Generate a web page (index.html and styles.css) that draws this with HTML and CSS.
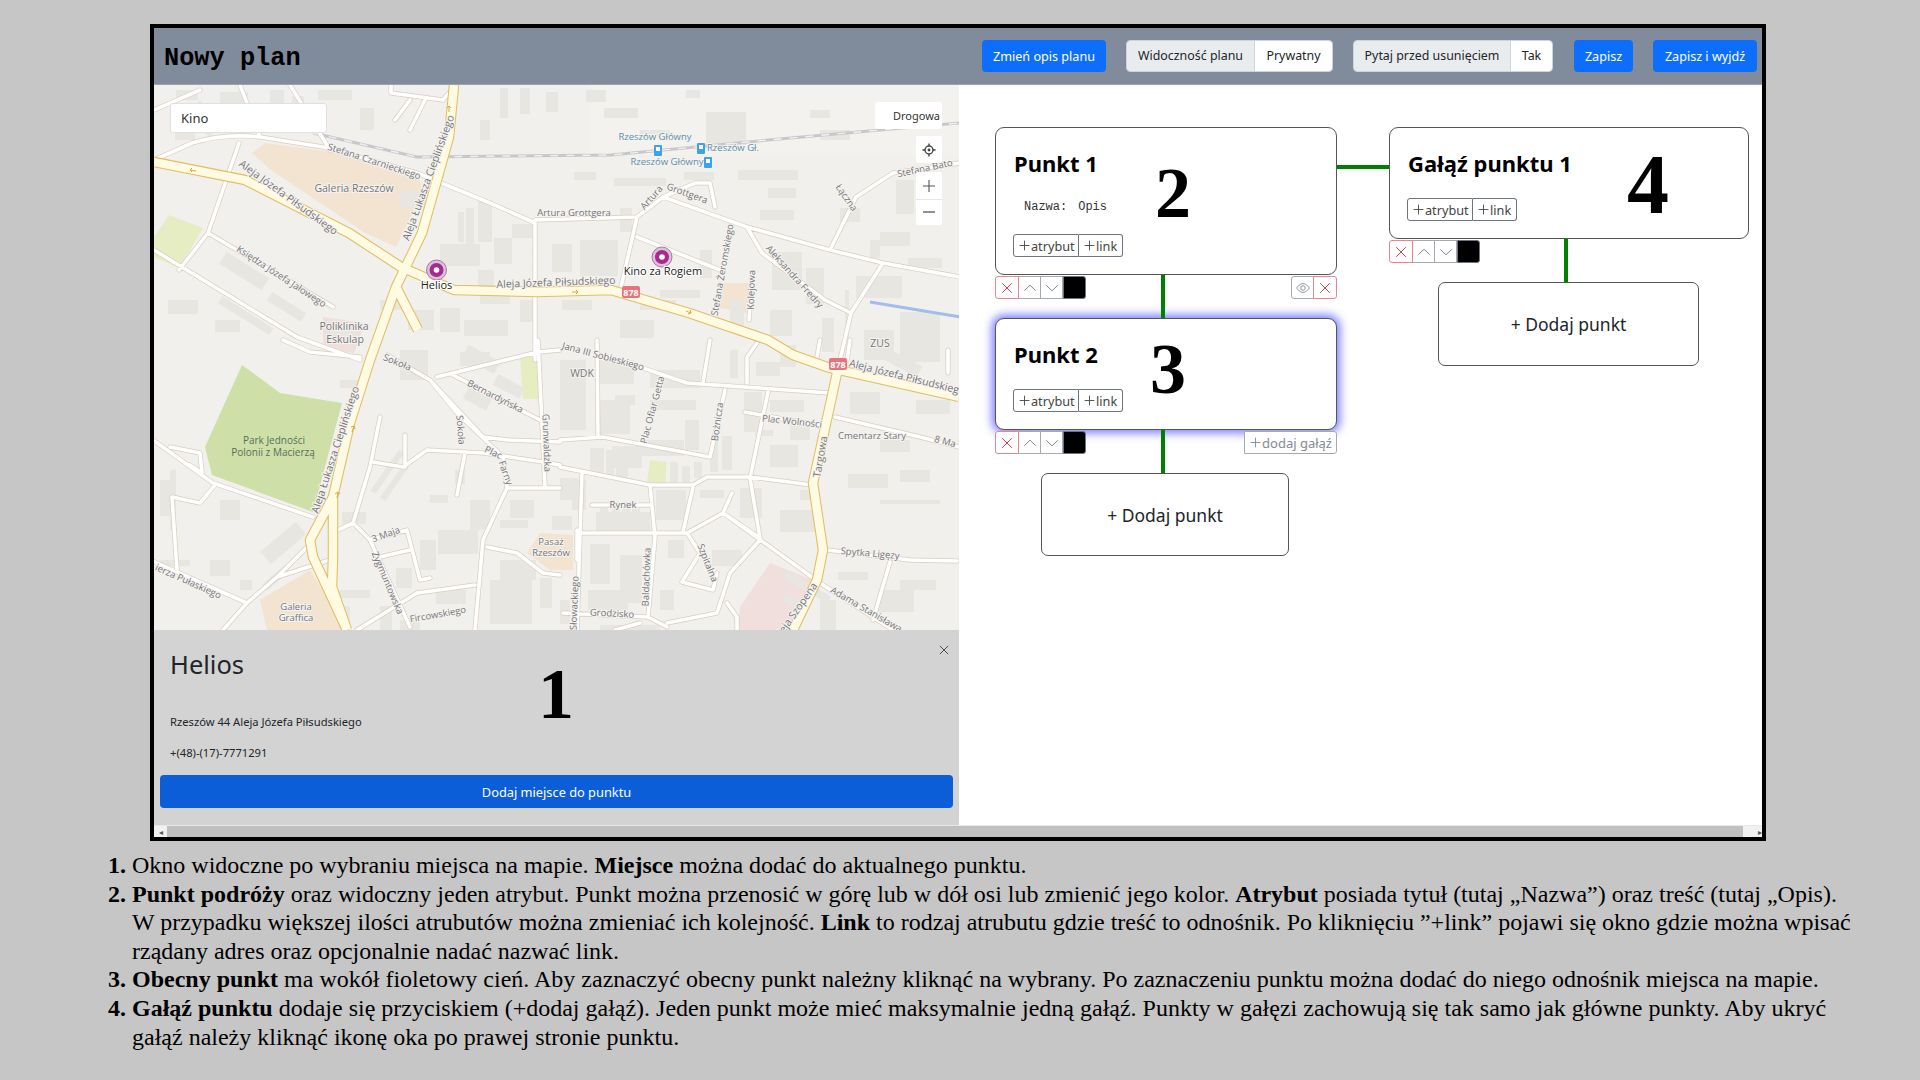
FILE: index.html
```html
<!DOCTYPE html>
<html lang="pl">
<head>
<meta charset="utf-8">
<title>Nowy plan</title>
<link rel="stylesheet" href="styles.css">
</head>
<body>
<svg class="defs" width="0" height="0" aria-hidden="true">
  <symbol id="i-x" viewBox="0 0 16 16"><path d="M2.5 2.5l11 11M13.5 2.5l-11 11" fill="none" stroke="currentColor" stroke-width="1.1"/></symbol>
  <symbol id="i-up" viewBox="0 0 16 16"><path d="M1.5 11L8 4.8 14.5 11" fill="none" stroke="currentColor" stroke-width="1.1"/></symbol>
  <symbol id="i-down" viewBox="0 0 16 16"><path d="M1.5 5L8 11.2 14.5 5" fill="none" stroke="currentColor" stroke-width="1.1"/></symbol>
  <symbol id="i-eye" viewBox="0 0 16 16"><path d="M.8 8S3.6 3 8 3s7.2 5 7.2 5-2.8 5-7.2 5S.8 8 .8 8z" fill="none" stroke="currentColor" stroke-width="1"/><circle cx="8" cy="8" r="2.6" fill="none" stroke="currentColor" stroke-width="1"/></symbol>
  <symbol id="i-plus" viewBox="0 0 16 16"><path d="M8 2v12M2 8h12" fill="none" stroke="currentColor" stroke-width="1.1"/></symbol>
</svg>

<main class="window">
  <header class="topbar">
    <h1 class="title">Nowy plan</h1>
    <button class="btn primary w-opis">Zmień opis planu</button>
    <div class="pair w-vis"><span class="pair-label">Widoczność planu</span><span class="pair-value">Prywatny</span></div>
    <div class="pair w-ask"><span class="pair-label">Pytaj przed usunięciem</span><span class="pair-value">Tak</span></div>
    <button class="btn primary w-save">Zapisz</button>
    <button class="btn primary w-exit">Zapisz i wyjdź</button>
  </header>

  <div class="workspace">
    <section class="left">
      <div class="map">
        <svg class="map-art" viewBox="154 85 805 545" width="805" height="545" xmlns="http://www.w3.org/2000/svg">
          <rect class="m-bg" x="154" y="85" width="805" height="545"/>
          <rect class="m-bg2" x="590" y="85" width="369" height="70"/>
          <g class="m-area">
            <path class="a-tan" d="M252 153L265 143 339 153 420 180 422 193 396 247 365 233 271 170z"/>
            <path class="a-tan" d="M260 600L310 570 347 630 267 630z"/>
            <path class="a-tan" d="M527 553L540 533 573 535 573 570 550 570z"/>
            <path class="a-tan" d="M723 283H749L747 313 715 307z"/>
            <path class="a-park" d="M242 365L280 393 342 403 313 512 212 475 205 447z"/>
            <path class="a-lime" d="M169 215L203 228 179 268 154 257V237z"/>
            <path class="a-lime" d="M520 357L537 355 540 399H523z"/>
            <path class="a-lime" d="M650 460L667 462 665 483 647 482z"/>
            <path class="a-pink" d="M770 563L813 580 793 630H738L740 607z"/>
            <path class="a-pink" d="M323 317L365 323 354 353 323 350z"/>
          </g>
          <path class="m-b" d="M168 300h30v14h-30zM215 320h25v12h-25zM176 90h22v10h-22zM220 92h28v12h-28zM270 90h14v24h-14zM292 96h12v30h-12zM318 90h34v10h-34zM360 108h14v22h-14zM400 190h26v18h-26zM478 200h14v42h-14zM466 208h8v36h-8zM458 212h6v30h-6zM500 88h8v30h-8zM520 88h10v26h-10zM546 92h12v20h-12zM586 90h20v12h-20zM604 108h34v10h-34zM706 112h40v36h-40zM686 90h14v8h-14zM614 178h52v8h-52zM684 172h30v8h-30zM738 170h60v10h-60zM574 172h22v8h-22zM620 208h12v24h-12zM478 270h16v26h-16zM494 238h18v26h-18zM512 224h20v14h-20zM440 244h40v22h-40zM580 240h38v36h-38zM552 244h20v28h-20zM560 286h38v4h-38zM840 208h20v14h-20zM820 130h30v10h-30zM896 180h18v34h-18zM880 232h30v14h-30zM908 258h34v10h-34zM856 276h46v22h-46zM768 188h28v10h-28zM760 210h34v10h-34zM772 252h30v38h-30zM806 268h18v36h-18zM700 250h12v28h-12zM660 290h40v8h-40zM900 312h40v50h-40zM864 330h30v30h-30zM730 300h14v26h-14zM640 300h36v10h-36zM620 320h34v18h-34zM562 300h30v10h-30zM520 300h16v22h-16zM480 290h30v14h-30zM464 320h44v16h-44zM440 308h20v24h-20zM408 310h26v20h-26zM380 300h24v10h-24zM340 380h22v8h-22zM400 350h28v30h-28zM460 352h30v14h-30zM560 360h26v70h-26zM600 360h34v24h-34zM650 370h50v18h-50zM744 392h18v40h-18zM770 400h34v12h-34zM790 420h20v20h-20zM850 392h30v22h-30zM880 440h30v12h-30zM916 400h34v14h-34zM848 474h40v14h-40zM900 470h30v12h-30zM800 490h10v10h-10zM780 510h36v22h-36zM838 572h30v8h-30zM900 580h36v10h-36zM878 590h36v22h-36zM600 400h30v34h-30zM650 400h46v10h-46zM612 446h30v22h-30zM572 480h14v30h-14zM596 512h54v20h-54zM656 490h30v30h-30zM700 490h24v8h-24zM740 488h22v30h-22zM590 544h20v40h-20zM620 555h22v48h-22zM668 540h16v18h-16zM712 550h30v16h-30zM588 590h40v20h-40zM660 590h14v20h-14zM560 600h10v24h-10zM500 560h36v20h-36zM490 580h42v44h-42zM420 540h16v30h-16zM438 530h40v24h-40zM396 568h16v20h-16zM436 590h30v14h-30zM342 512h24v12h-24zM220 500h20v20h-20zM170 470h6v60h-6zM160 480h10v36h-10zM240 580h12v10h-12zM330 590h40v8h-40zM340 606h10v24h-10zM380 606h12v24h-12zM810 110h20v8h-20zM640 440h44v16h-44zM160 560h30v6h-30zM600 625h60v5h-60zM820 600h16v30h-16zM880 500h60v4h-60zM590 448h14v26h-14zM606 450h8v26h-8zM616 452h12v26h-12zM670 462h8v20h-8zM682 466h8v16h-8zM694 462h8v16h-8zM710 440h8v32h-8zM722 436h10v34h-10zM600 508h8v24h-8zM612 508h8v24h-8zM622 508h8v24h-8zM632 508h8v24h-8zM560 478h18v22h-18zM552 516h20v14h-20zM845 290h4v50h-4zM870 240h10v18h-10zM822 318h12v34h-12zM770 310h22v26h-22zM780 345h16v22h-16zM730 350h8v28h-8zM756 362h24v14h-24zM615 395h20v10h-20zM685 420h14v30h-14zM770 445h28v22h-28zM755 430h18v6h-18zM470 500h20v30h-20zM510 500h24v18h-24zM500 520h28v8h-28zM455 470h10v14h-10zM430 495h18v8h-18zM505 600h16v22h-16zM540 578h12v30h-12zM400 620h20v10h-20zM640 130h30v6h-30zM480 120h10v20h-10zM175 130h20v10h-20zM330 330h26v6h-26zM210 560h20v16h-20z"/>
          <g class="m-b2">
            <path transform="rotate(35 210 120)" d="M190 110h44v10h-44zM190 126h30v8h-30z"/>
            <path transform="rotate(32 250 290)" d="M210 270h50v14h-50zM270 280h40v10h-40zM230 310h60v8h-60z"/>
            <path transform="rotate(-40 290 540)" d="M260 530h46v16h-46zM240 556h30v8h-30z"/>
            <path transform="rotate(28 850 430)" d="M844 340h40v12h-40z"/>
            <path transform="rotate(28 490 390)" d="M450 360h36v14h-36zM490 372h30v12h-30zM470 396h26v14h-26z"/>
            <path transform="rotate(-55 390 480)" d="M370 470h50v6h-50zM370 482h42v6h-42z"/>
            <path transform="rotate(30 800 590)" d="M780 580h50v8h-50zM790 600h24v8h-24z"/>
          </g>
          <path class="m-rail" d="M313 133L417 157 611 155 768 140 960 123"/>
          <path class="m-rail-d" d="M313 133L417 157 611 155 768 140 960 123"/>
          <path class="m-water" d="M870 302L960 317"/>

          <g class="m-case">
            <path id="r" d="M154 160L192 143Q225 133 260 137L323 147 417 173 490 203 535 223V360M535 220L637 217 663 197 695 183 710 183 715 207M637 237L720 270M637 217L621 287M663 197L747 227 830 250 883 263 960 277M747 227L762 253 825 300 851 313M883 263L851 313 840 360M830 250L856 197 893 173 960 163M752 277L749 320M391 85V93L443 100 456 85M395 120L410 100M410 130L425 100M208 233L333 307M154 250L297 337 360 360M239 143L208 233 179 270M154 110L200 90M240 85L260 137M290 85L330 150M153 440L213 483 313 517M170 447L200 453 202 473 190 465M172 497L200 503 215 485M172 497L177 570M150 560L247 603 277 577 307 547M247 603L223 630M277 577L330 560M338 530L353 523 370 467 380 417M373 462L403 467 427 450 483 453 543 462 560 465M405 467V435M465 453L457 495M353 523L370 540 410 627M370 540L407 530 420 580 430 578M380 557L410 550M357 630L417 593 475 585M507 488L483 540 475 630M507 488H560M487 547L517 553 543 573 560 575M387 355L430 380 457 413 503 457 507 488M430 380L483 437 508 440 560 442M453 375L540 420M437 377L538 352 560 350M538 340L545 487M283 340L310 352 360 357M560 440L603 437 710 457 725 390M597 340L598 437M560 467L650 485H693L707 477H750L812 485M640 367L687 383 830 393M703 383L710 340M747 383V357L757 343M768 392L750 478 760 538 723 513 687 533H577M732 493L723 513M693 487L683 532M650 485L655 537 648 617 667 627M582 473L577 630M592 505H650M723 513L820 583 893 630M760 540L730 573 717 613 667 623M687 533L700 553 682 582 713 590 717 573M563 613L647 617M745 412L827 427M835 417L920 437 959 447M827 550L910 560 957 561M890 562L873 620M727 603L737 617V630M850 340L847 360M820 340L817 357M948 350V373M577 530L577 560M615 630L640 623"/>
          </g>
          <use href="#r" class="m-fill"/>

          <g class="m-major-c">
            <path id="y" d="M154 162L245 180 349 233 401 267 454 290 537 292 611 290 689 313 768 340 793 355 830 368 959 397M454 85L449 137 422 233 396 287 370 360 350 423 333 497 310 540 313 557 347 630M333 497V557L332 587 347 630M837 373L813 483 823 550 817 580 793 630M396 287L418 330"/>
          </g>
          <use href="#y" class="m-major-f"/>
          <path class="m-arrow" d="M449 112v-6m-2 2l2-2 2 2M196 171l-6-1m2-2l-2 2 2 2M298 208l5 3m-1-3l1 3-3 1M572 292h6m-2-2l2 2-2 2M686 311l5 2m-1-3l1 3-3 1M352 432l2-6m-3 1l3-1 1 3M337 498l1-6m-3 2l3-2 2 2"/>

          <g class="m-l">
            <text transform="translate(429 178) rotate(-70)">Aleja Łukasza Cieplińskiego</text>
            <text transform="translate(336 450) rotate(-72)">Aleja Łukasza Cieplińskiego</text>
            <text transform="translate(374 162) rotate(18)" class="s">Stefana Czarnieckiego</text>
            <text transform="translate(288 198) rotate(36)">Aleja Józefa Piłsudskiego</text>
            <text x="354" y="189">Galeria Rzeszów</text>
            <text transform="translate(281 277) rotate(33)" class="s">Księdza Józefa Jałowego</text>
            <text x="344" y="327">Poliklinika</text>
            <text x="345" y="340">Eskulap</text>
            <text x="574" y="213" class="s">Artura Grottgera</text>
            <text transform="translate(652 198) rotate(-48)" class="s">Artura</text>
            <text transform="translate(687 194) rotate(20)" class="s">Grottgera</text>
            <text x="655" y="137" class="rail">Rzeszów Główny</text>
            <text x="733" y="148" class="rail">Rzeszów Gł.</text>
            <text x="667" y="162" class="rail">Rzeszów Główny</text>
            <text transform="translate(752 290) rotate(-88)" class="s">Kolejowa</text>
            <text transform="translate(723 270) rotate(-80)" class="s">Stefana Żeromskiego</text>
            <text transform="translate(794 277) rotate(48)" class="s">Aleksandra Fredry</text>
            <text transform="translate(846 198) rotate(55)" class="s">Łączna</text>
            <text transform="translate(925 169) rotate(-12)" class="s">Stefana Bato</text>
            <text x="880" y="344">ZUS</text>
            <text transform="translate(556 283) rotate(-2)">Aleja Józefa Piłsudskiego</text>
            <text transform="translate(907 378) rotate(14)">Aleja Józefa Piłsudskiego</text>
            <text transform="translate(603 357) rotate(15)" class="s">Jana III Sobieskiego</text>
            <text x="582" y="374">WDK</text>
            <text transform="translate(653 410) rotate(-75)" class="s">Plac Ofiar Getta</text>
            <text transform="translate(718 422) rotate(-82)" class="s">Bożnicza</text>
            <text transform="translate(792 422) rotate(6)" class="s">Plac Wolności</text>
            <text transform="translate(821 457) rotate(-80)">Targowa</text>
            <text x="872" y="436" class="s">Cmentarz Stary</text>
            <text transform="translate(945 442) rotate(15)" class="s">8 Ma</text>
            <text x="623" y="505" class="s">Rynek</text>
            <text transform="translate(870 554) rotate(5)" class="s">Spytka Ligęzy</text>
            <text transform="translate(707 563) rotate(68)" class="s">Szpitalna</text>
            <text transform="translate(647 577) rotate(-88)" class="s">Baldachówka</text>
            <text transform="translate(866 610) rotate(30)" class="s">Adama Stanisława</text>
            <text transform="translate(612 614) rotate(3)" class="s">Grodzisko</text>
            <text transform="translate(796 612) rotate(-55)">Aleja Szopena</text>
            <text transform="translate(575 603) rotate(-88)" class="s">Słowackiego</text>
            <text x="274" y="441" class="park">Park Jedności</text>
            <text x="273" y="453" class="park">Polonii z Macierzą</text>
            <text transform="translate(397 363) rotate(22)" class="s">Sokoła</text>
            <text transform="translate(460 430) rotate(85)" class="s">Sokoła</text>
            <text transform="translate(495 397) rotate(27)" class="s">Bernardyńska</text>
            <text transform="translate(493 453) rotate(25)" class="s">Plac</text>
            <text transform="translate(505 473) rotate(70)" class="s">Farny</text>
            <text transform="translate(546 443) rotate(88)" class="s">Grunwaldzka</text>
            <text transform="translate(387 583) rotate(67)" class="s">Zygmuntowska</text>
            <text transform="translate(386 535) rotate(-20)" class="s">3 Maja</text>
            <text transform="translate(438 615) rotate(-10)" class="s">Fircowskiego</text>
            <text x="551" y="542" class="s">Pasaż</text>
            <text x="551" y="553" class="s">Rzeszów</text>
            <text x="296" y="607" class="s">Galeria</text>
            <text x="296" y="618" class="s">Graffica</text>
            <text transform="translate(188 582) rotate(24)" class="s">ierza Pułaskiego</text>
          </g>

          <g class="m-station">
            <rect x="654" y="145" width="8" height="11" rx="1"/><rect x="697" y="143" width="8" height="11" rx="1"/><rect x="704" y="157" width="8" height="11" rx="1"/>
            <path class="m-st-w" d="M656 147h4v4h-4zM699 145h4v4h-4zM706 159h4v4h-4z"/>
          </g>
          <g>
            <rect class="m-shield" x="622" y="286" width="18" height="12" rx="2"/><text x="631" y="295.5" class="m-shield-t">878</text>
            <rect class="m-shield" x="829" y="358" width="18" height="12" rx="2"/><text x="838" y="367.5" class="m-shield-t">878</text>
          </g>
          <g>
            <circle class="pin-o" cx="436.5" cy="270" r="10"/><circle class="pin" cx="436.5" cy="270" r="7"/><circle class="pin-c" cx="436.5" cy="270" r="2.8"/>
            <circle class="pin-o" cx="662" cy="257" r="10"/><circle class="pin" cx="662" cy="257" r="7"/><circle class="pin-c" cx="662" cy="257" r="2.8"/>
            <text x="436.5" y="289" class="pin-l">Helios</text>
            <text x="663" y="275" class="pin-l">Kino za Rogiem</text>
          </g>
        </svg>

        <div class="search">Kino</div>
        <div class="maptype">Drogowa</div>
        <div class="mapctl locate">
          <svg width="14" height="14" viewBox="0 0 16 16"><circle cx="8" cy="8" r="4.5" fill="none" stroke="#444" stroke-width="1.6"/><circle cx="8" cy="8" r="1.6" fill="#444"/><path d="M8 .5v3M8 12.5v3M.5 8h3M12.5 8h3" stroke="#444" stroke-width="1.6"/></svg>
        </div>
        <div class="mapctl zoom">
          <span class="zoom-b"><svg width="16" height="16"><use href="#i-plus"/></svg></span>
          <span class="zoom-b"><svg width="14" height="14" viewBox="0 0 14 14"><path d="M1 7h12" stroke="#555" stroke-width="1.3"/></svg></span>
        </div>
      </div>

      <div class="panel">
        <svg class="close" width="12" height="12"><use href="#i-x"/></svg>
        <h2 class="place">Helios</h2>
        <p class="info">Rzeszów 44 Aleja Józefa Piłsudskiego</p>
        <p class="info">+(48)-(17)-7771291</p>
        <button class="btn addplace">Dodaj miejsce do punktu</button>
        <span class="num n1">1</span>
      </div>
    </section>

    <section class="plan">
      <div class="track main-track">
        <article class="card">
          <h3>Punkt 1</h3>
          <div class="attr"><span>Nazwa:</span><span>Opis</span></div>
          <div class="addgroup"><button><svg width="13" height="13"><use href="#i-plus"/></svg>atrybut</button><button><svg width="13" height="13"><use href="#i-plus"/></svg>link</button></div>
          <span class="num n2">2</span>
        </article>
        <div class="stem">
          <div class="tools">
            <button class="t red"><svg width="14" height="14"><use href="#i-x"/></svg></button><button class="t"><svg width="14" height="14"><use href="#i-up"/></svg></button><button class="t"><svg width="14" height="14"><use href="#i-down"/></svg></button><span class="swatch"></span>
          </div>
          <i class="line"></i>
          <div class="tools right">
            <button class="t"><svg width="14" height="14"><use href="#i-eye"/></svg></button><button class="t red"><svg width="14" height="14"><use href="#i-x"/></svg></button>
          </div>
        </div>
        <article class="card current">
          <h3>Punkt 2</h3>
          <div class="addgroup"><button><svg width="13" height="13"><use href="#i-plus"/></svg>atrybut</button><button><svg width="13" height="13"><use href="#i-plus"/></svg>link</button></div>
          <span class="num n3">3</span>
        </article>
        <div class="stem">
          <div class="tools">
            <button class="t red"><svg width="14" height="14"><use href="#i-x"/></svg></button><button class="t"><svg width="14" height="14"><use href="#i-up"/></svg></button><button class="t"><svg width="14" height="14"><use href="#i-down"/></svg></button><span class="swatch"></span>
          </div>
          <i class="line"></i>
          <div class="tools right">
            <button class="t wide"><svg width="13" height="13"><use href="#i-plus"/></svg>dodaj gałąź</button>
          </div>
        </div>
        <button class="addpoint main-add">+ Dodaj punkt</button>
      </div>

      <i class="hline"></i>

      <div class="track branch-track">
        <article class="card">
          <h3>Gałąź punktu 1</h3>
          <div class="addgroup"><button><svg width="13" height="13"><use href="#i-plus"/></svg>atrybut</button><button><svg width="13" height="13"><use href="#i-plus"/></svg>link</button></div>
          <span class="num n4">4</span>
        </article>
        <div class="stem">
          <div class="tools">
            <button class="t red"><svg width="14" height="14"><use href="#i-x"/></svg></button><button class="t"><svg width="14" height="14"><use href="#i-up"/></svg></button><button class="t"><svg width="14" height="14"><use href="#i-down"/></svg></button><span class="swatch"></span>
          </div>
          <i class="line"></i>
        </div>
        <button class="addpoint branch-add">+ Dodaj punkt</button>
      </div>
    </section>
  </div>

  <div class="hscroll"><span class="sb-btn">&#9666;</span><span class="sb-track"></span><span class="sb-btn end">&#9656;</span></div>
</main>

<ol class="notes">
  <li>Okno widoczne po wybraniu miejsca na mapie. <b>Miejsce</b> można dodać do aktualnego punktu.</li>
  <li><b>Punkt podróży</b> oraz widoczny jeden atrybut. Punkt można przenosić w górę lub w dół osi lub zmienić jego kolor. <b>Atrybut</b> posiada tytuł (tutaj „Nazwa”) oraz treść (tutaj „Opis). W przypadku większej ilości atrubutów można zmieniać ich kolejność. <b>Link</b> to rodzaj atrubutu gdzie treść to odnośnik. Po kliknięciu ”+link” pojawi się okno gdzie można wpisać rządany adres oraz opcjonalnie nadać nazwać link.</li>
  <li><b>Obecny punkt</b> ma wokół fioletowy cień. Aby zaznaczyć obecny punkt należny kliknąć na wybrany. Po zaznaczeniu punktu można dodać do niego odnośnik miejsca na mapie.</li>
  <li><b>Gałąź punktu</b> dodaje się przyciskiem (+dodaj gałąź). Jeden punkt może mieć maksymalnie jedną gałąź. Punkty w gałęzi zachowują się tak samo jak główne punkty. Aby ukryć gałąź należy kliknąć ikonę oka po prawej stronie punktu.</li>
</ol>
</body>
</html>
```

FILE: styles.css
```css
* { box-sizing: border-box; }
html, body { margin: 0; height: 100%; }
body {
  background: #c6c6c6;
  padding: 24px 0 0 150px;
  font-family: "Noto Sans", "Open Sans", sans-serif;
  overflow: hidden;
}
.defs { position: absolute; }
button { font-family: inherit; cursor: pointer; }

.window {
  width: 1616px;
  height: 817px;
  border: 4px solid #000;
  background: #fff;
  display: flex;
  flex-direction: column;
}
.topbar {
  height: 57px;
  flex: none;
  background: #808b9b;
  border-bottom: 1px solid #9aa4b1;
  display: flex;
  align-items: center;
  gap: 20px;
  padding: 0 5px 0 10px;
}
.title {
  margin: 4px auto 0 0;
  font: bold 25.3px "Liberation Mono", "DejaVu Sans Mono", monospace;
  color: #000;
}
.btn {
  height: 32px;
  border: 0;
  border-radius: 4px;
  font-size: 12.6px;
  color: #fff;
  padding: 0;
}
.primary { background: #0d6efd; }
.w-opis { width: 124px; }
.w-save { width: 59px; margin-left: 1px; }
.w-exit { width: 104px; }
.pair {
  height: 32px;
  display: flex;
  border-radius: 4px;
  overflow: hidden;
  border: 1px solid #ced4da;
  font-size: 12.4px;
  line-height: 30px;
  color: #212529;
  text-align: center;
}
.pair-label { background: #e9ecef; border-right: 1px solid #ced4da; }
.pair-value { background: #fff; flex: 1; }
.w-vis { width: 207px; }
.w-vis .pair-label { width: 128px; }
.w-ask { width: 200px; }
.w-ask .pair-label { width: 157px; }

.workspace { flex: 1; display: flex; min-height: 0; }
.left { width: 805px; flex: none; display: flex; flex-direction: column; }
.map { height: 545px; flex: none; position: relative; overflow: hidden; }
.map-art { display: block; }

.m-bg { fill: #f1f0ec; }
.m-bg2 { fill: #f4f2ee; }
.a-tan { fill: #f2e4d1; }
.a-park { fill: #cfdfa8; }
.a-lime { fill: #e7edc3; }
.a-pink { fill: #f0dfdc; }
.m-b { fill: #e8e6e0; }
.m-b2 path { fill: #e8e6e0; }
.m-rail { fill: none; stroke: #c8c8cc; stroke-width: 3; }
.m-rail-d { fill: none; stroke: #f0f0f0; stroke-width: 1.4; stroke-dasharray: 8 8; }
.m-water { fill: none; stroke: #a2bceb; stroke-width: 3; }
.m-case, .m-fill, .m-major-c, .m-major-f { fill: none; stroke-linejoin: round; }
.m-case { stroke: #d8cebd; stroke-width: 5; stroke-linecap: round; }
.m-fill { stroke: #fff; stroke-width: 3.6; stroke-linecap: round; }
.m-major-c { stroke: #e3bd62; stroke-width: 10.5; }
.m-major-f { stroke: #fffbe3; stroke-width: 8.4; }
.m-arrow { fill: none; stroke: #dca93c; stroke-width: 1; }
.m-l text {
  font: 10.5px "Open Sans", "Noto Sans", sans-serif;
  fill: #76747a;
  text-anchor: middle;
  dominant-baseline: middle;
  paint-order: stroke;
  stroke: #f4f3ef;
  stroke-width: 2px;
}
.m-l .s { font-size: 9.5px; }
.m-l .rail { font-size: 9.5px; fill: #5f8cab; }
.m-l .park { font-size: 10px; fill: #55705a; stroke: #cfdfa8; }
.m-station rect { fill: #3aa3ee; }
.m-st-w { fill: #fff; }
.m-shield { fill: #e8737c; }
.m-shield-t { font: bold 9px "Open Sans", sans-serif; fill: #fff; text-anchor: middle; }
.pin-o { fill: #d9c3d6; stroke: #a8569c; stroke-width: .8; }
.pin { fill: #a62a90; }
.pin-c { fill: #fff; }
.pin-l {
  font: 11px "Open Sans", "Noto Sans", sans-serif;
  fill: #222;
  text-anchor: middle;
  paint-order: stroke;
  stroke: #fff;
  stroke-width: 2px;
}

.search {
  position: absolute;
  left: 16px;
  top: 18px;
  width: 157px;
  height: 30px;
  background: #fff;
  border: 1px solid #dde0e4;
  border-radius: 3px;
  font-size: 13px;
  line-height: 28px;
  padding-left: 10px;
  color: #333;
}
.maptype {
  position: absolute;
  left: 721px;
  top: 17px;
  width: 67px;
  height: 27px;
  background: #fff;
  border-radius: 3px;
  font-size: 11px;
  line-height: 27px;
  text-align: right;
  padding-right: 2px;
  color: #333;
}
.mapctl {
  position: absolute;
  left: 762px;
  width: 26px;
  background: #fff;
  border-radius: 2px;
  display: flex;
  flex-direction: column;
  align-items: center;
  justify-content: center;
  color: #555;
}
.locate { top: 51px; height: 27px; }
.zoom { top: 87px; height: 53px; }
.zoom-b { height: 26px; width: 100%; display: flex; align-items: center; justify-content: center; }
.zoom-b + .zoom-b { border-top: 1px solid #e6e6e6; }

.panel {
  flex: 1;
  position: relative;
  background: #d3d3d3;
  padding: 17px 0 0 16px;
  color: #212529;
}
.place { width: fit-content; margin: 0 0 32px; font-weight: 400; font-size: 25.5px; line-height: 34px; }
.info { width: fit-content; margin: 0 0 13px; font-size: 11.2px; line-height: 18px; }
.addplace {
  display: block;
  width: 793px;
  height: 33px;
  margin: 7px 0 0 -10px;
  background: #0b5ed7;
  font-size: 12.8px;
}
.close { position: absolute; right: 9px; top: 14px; color: #333; }
.num {
  position: absolute;
  font: bold 72px/1 "Liberation Serif", serif;
  color: #000;
  pointer-events: none;
}
.n1 { left: 384px; top: 28px; }
.n2 { left: 159px; top: 29px; }
.n3 { left: 154px; top: 14px; }
.n4 { left: 237px; top: 15px; font-size: 84px; }

.plan { flex: 1; display: flex; align-items: flex-start; padding: 42px 0 0 36px; }
.track { display: flex; flex-direction: column; }
.main-track { width: 342px; }
.branch-track { width: 360px; }
.card {
  position: relative;
  border: 1px solid #555;
  border-radius: 9px;
  background: #fff;
  padding: 17px 17px 17px;
  z-index: 1;
}
.current { box-shadow: 0 0 10px 3px #7a7aff; }
.card h3 {
  margin: 0 0 17px 1px;
  font-size: 22px;
  line-height: 36px;
  font-weight: 700;
  color: #000;
  white-space: nowrap;
}
.attr {
  display: flex;
  gap: 11px;
  margin: 0 0 17px 11px;
  height: 19px;
  font: 12px/19px "Liberation Mono", monospace;
  color: #333;
}
.addgroup { display: inline-flex; vertical-align: top; }
.addgroup button {
  height: 23px;
  background: #fff;
  border: 1px solid #6c757d;
  padding: 0 2px 0 4px;
  font-size: 12.7px;
  line-height: 20px;
  color: #444;
  display: flex;
  align-items: center;
}
.addgroup button:first-child { border-radius: 3px 0 0 3px; width: 66px; }
.addgroup button:last-child { border-radius: 0 3px 3px 0; border-left: 0; width: 44px; }

.stem { height: 43px; display: grid; z-index: 2; position: relative; }
.main-track .stem { grid-template-columns: 166px 4px 1fr; }
.branch-track .stem { grid-template-columns: 175px 4px 1fr; }
.line { background: #008000; height: 43px; display: block; }
.tools { display: flex; height: 23px; margin-top: 1px; }
.tools.right { justify-content: flex-end; }
.t {
  width: 23px;
  height: 23px;
  padding: 0;
  background: #fff;
  border: 1px solid #a4aab0;
  margin-left: -1px;
  color: #7c838a;
  display: flex;
  align-items: center;
  justify-content: center;
}
.tools .t:first-child { margin-left: 0; border-radius: 3px 0 0 3px; }
.tools .t:last-child { border-radius: 0 3px 3px 0; }
.t.red { border-color: #e9838d; color: #dc3545; z-index: 1; width: 24px; }
.t.wide { width: 93px; border-radius: 3px; font-size: 13px; white-space: nowrap; color: #838a91; }
.swatch { width: 23px; height: 23px; background: #000; border: 1px solid #6c757d; border-radius: 0 3px 3px 0; }
.addpoint {
  height: 84px;
  border: 1px solid #555;
  border-radius: 7px;
  background: #fff;
  font-size: 17.5px;
  color: #212529;
}
.main-add { width: 248px; margin-left: 46px; height: 83px; }
.branch-add { width: 261px; margin-left: 49px; }
.hline { width: 52px; height: 4px; margin-top: 38px; background: #008000; flex: none; }

.hscroll {
  height: 12px;
  flex: none;
  display: flex;
  background: #f1f1f1;
  border-top: 1px solid #e8e8e8;
  font-size: 8px;
  line-height: 11px;
  color: #555;
}
.sb-btn { width: 13px; text-align: center; background: #f1f1f1; }
.sb-btn.end { width: 19px; text-align: right; }
.sb-track { flex: 1; background: #c0c0c0; }

.notes {
  margin: 10px 0 0 -150px;
  padding: 0 64px 0 132px;
  font: 24px/28.6px "Liberation Serif", serif;
  color: #000;
}
.notes li::marker { font-weight: bold; }
```
